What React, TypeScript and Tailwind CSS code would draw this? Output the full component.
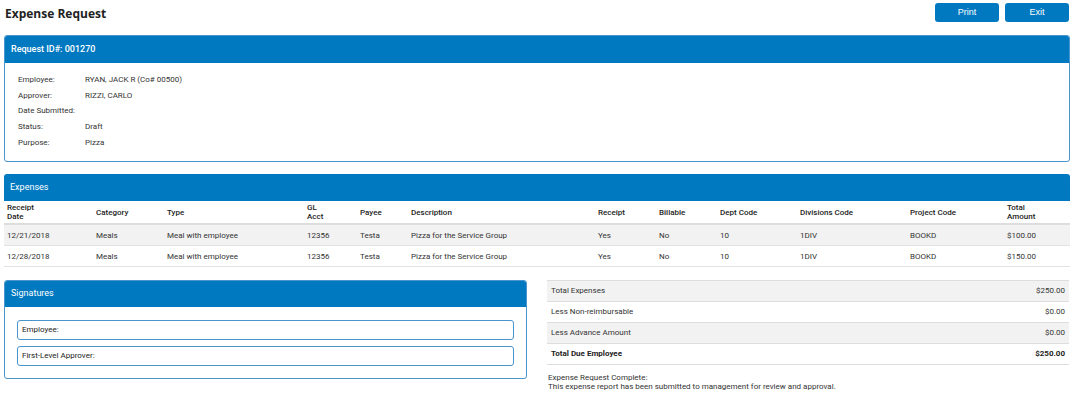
import React from "react";

const details = [
  ["Employee:", "RYAN, JACK R (Co# 00500)"],
  ["Approver:", "RIZZI, CARLO"],
  ["Date Submitted:", ""],
  ["Status:", "Draft"],
  ["Purpose:", "Pizza"],
];

const cols = [
  { label: ["Receipt", "Date"], w: "w-[89px]" },
  { label: ["Category"], w: "w-[71px]" },
  { label: ["Type"], w: "w-[140px]" },
  { label: ["GL", "Acct"], w: "w-[53px]" },
  { label: ["Payee"], w: "w-[51px]" },
  { label: ["Description"], w: "w-[187px]" },
  { label: ["Receipt"], w: "w-[61px]" },
  { label: ["Billable"], w: "w-[61px]" },
  { label: ["Dept Code"], w: "w-[80px]" },
  { label: ["Divisions Code"], w: "w-[110px]" },
  { label: ["Project Code"], w: "w-[97px]" },
  { label: ["Total", "Amount"], w: "" },
];

const rows = [
  ["12/21/2018", "Meals", "Meal with employee", "12356", "Testa", "Pizza for the Service Group", "Yes", "No", "10", "1DIV", "BOOKD", "$100.00"],
  ["12/28/2018", "Meals", "Meal with employee", "12356", "Testa", "Pizza for the Service Group", "Yes", "No", "10", "1DIV", "BOOKD", "$150.00"],
];

const totals = [
  ["Total Expenses", "$250.00", true, false],
  ["Less Non-reimbursable", "$0.00", false, false],
  ["Less Advance Amount", "$0.00", true, false],
  ["Total Due Employee", "$250.00", false, true],
] as const;

export default function App() {
  return (
    <div className="px-[4px] font-['Roboto',sans-serif] text-[#333] text-[8px] bg-white min-h-[396px]">
      {/* top bar */}
      <div className="flex items-start justify-between h-[35px]">
        <h1 className="font-['Open_Sans',sans-serif] font-bold text-[12px] text-[#222] pl-[1px] pt-[5px]">
          Expense Request
        </h1>
        <div className="flex gap-[6px] pt-[3px] pr-[1px]">
          <button className="w-[64px] h-[19px] rounded-[3px] bg-[#0079c1] text-white text-[9px] font-['Liberation_Sans',sans-serif]">
            Print
          </button>
          <button className="w-[64px] h-[19px] rounded-[3px] bg-[#0079c1] text-white text-[9px] font-['Liberation_Sans',sans-serif]">
            Exit
          </button>
        </div>
      </div>

      {/* request panel */}
      <div className="border border-[#4a95cc] rounded-[3px] overflow-hidden h-[127px]">
        <div className="bg-[#0079c1] h-[27px] flex items-center px-[6px] text-white text-[9px] font-medium">
          Request ID#: 001270
        </div>
        <div className="pt-[9px] pl-[13px]">
          {details.map(([k, v]) => (
            <div key={k} className="flex h-[15.75px] items-center">
              <span className="w-[67px]">{k}</span>
              <span>{v}</span>
            </div>
          ))}
        </div>
      </div>

      {/* expenses */}
      <div className="mt-[12px]">
        <div className="bg-[#0079c1] h-[27px] flex items-center px-[6px] text-white text-[9px] rounded-t-[3px]">
          Expenses
        </div>
        <div className="flex items-center h-[24px] border-b-2 border-[#ddd] font-medium text-[#222] leading-[9px] px-[3px]">
          {cols.map((c, i) => (
            <div key={i} className={`${c.w} flex flex-col`}>
              {c.label.map((l) => (
                <span key={l}>{l}</span>
              ))}
            </div>
          ))}
        </div>
        {rows.map((r, ri) => (
          <div
            key={ri}
            className={`flex items-center h-[21px] pt-[1px] border-b border-[#e2e2e2] px-[3px] ${ri === 0 ? "bg-[#f2f2f2]" : ""}`}
          >
            {r.map((cell, i) => (
              <div key={i} className={cols[i].w}>
                {cell}
              </div>
            ))}
          </div>
        ))}
      </div>

      {/* bottom */}
      <div className="flex mt-[13px] gap-[20px]">
        <div className="w-[523px] h-[99px] border border-[#4a95cc] rounded-[3px] overflow-hidden">
          <div className="bg-[#0079c1] h-[26px] flex items-center px-[6px] text-white text-[9px]">
            Signatures
          </div>
          <div className="px-[12px] pt-[13px] flex flex-col gap-[6px]">
            <div className="h-[20px] border border-[#4a95cc] rounded-[3px] flex items-center px-[4px] text-[#222]">
              Employee:
            </div>
            <div className="h-[20px] border border-[#4a95cc] rounded-[3px] flex items-center px-[4px] text-[#222]">
              First-Level Approver:
            </div>
          </div>
        </div>
        <div className="flex-1 pr-[1px]">
          <div className="border-t border-[#ddd]">
            {totals.map(([k, v, gray, bold]) => (
              <div
                key={k}
                className={`flex justify-between items-center h-[21px] border-b border-[#ddd] px-[4px] ${gray ? "bg-[#f2f2f2]" : ""} ${bold ? "font-bold text-[#222]" : ""}`}
              >
                <span>{k}</span>
                <span>{v}</span>
              </div>
            ))}
          </div>
          <div className="mt-[8px] leading-[9px] pl-[1px]">
            <div>Expense Request Complete:</div>
            <div>This expense report has been submitted to management for review and approval.</div>
          </div>
        </div>
      </div>
    </div>
  );
}
